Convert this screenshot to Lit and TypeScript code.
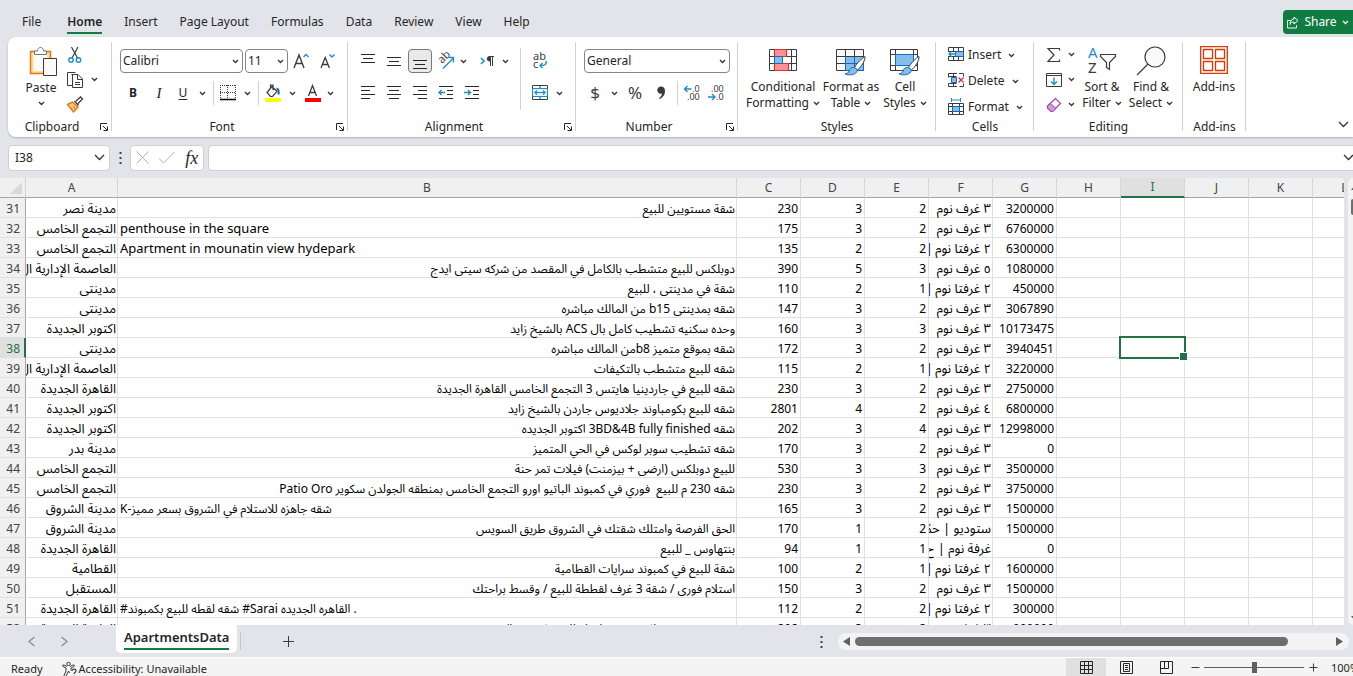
import { LitElement, html, css, svg, nothing } from "lit";
import { customElement, state } from "lit/decorators.js";
import { classMap } from "lit/directives/class-map.js";

type Row = [number, string, string, number, number, number, string, number];

const TWO = "٢ غرفتا نوم\u2009|";
const THREE = "٣ غرف نوم";

const ROWS: Row[] = [
  [31, "مدينة نصر", "شقة مستويين للبيع", 230, 3, 2, THREE, 3200000],
  [32, "التجمع الخامس", "penthouse in the square", 175, 3, 2, THREE, 6760000],
  [33, "التجمع الخامس", "Apartment in mounatin view hydepark", 135, 2, 2, TWO, 6300000],
  [34, "العاصمة الإدارية ال", "دوبلكس للبيع متشطب بالكامل في المقصد من شركه سيتى ايدج", 390, 5, 3, "٥ غرف نوم", 1080000],
  [35, "مدينتى", "شقة في مدينتى ، للبيع", 110, 2, 1, TWO, 450000],
  [36, "مدينتى", "شقه بمدينتى b15 من المالك مباشره", 147, 3, 2, THREE, 3067890],
  [37, "اكتوبر الجديدة", "وحده سكنيه تشطيب كامل بال ACS بالشيخ زايد", 160, 3, 3, THREE, 10173475],
  [38, "مدينتى", "شقه بموقع متميز b8من المالك مباشره", 172, 3, 2, THREE, 3940451],
  [39, "العاصمة الإدارية ال", "شقه للبيع متشطب بالتكيفات", 115, 2, 1, TWO, 3220000],
  [40, "القاهرة الجديدة", "شقه للبيع في جاردينيا هايتس 3 التجمع الخامس القاهرة الجديدة", 230, 3, 2, THREE, 2750000],
  [41, "اكتوبر الجديدة", "شقه للبيع بكومباوند جلاديوس جاردن بالشيخ زايد", 2801, 4, 2, "٤ غرف نوم", 6800000],
  [42, "اكتوبر الجديدة", "شقه 3BD&4B fully finished اكتوبر الجديده", 202, 3, 4, THREE, 12998000],
  [43, "مدينة بدر", "شقه تشطيب سوبر لوكس في الحي المتميز", 170, 3, 2, THREE, 0],
  [44, "التجمع الخامس", "للبيع دوبلكس (ارضى + بيزمنت) فيلات تمر حنة", 530, 3, 3, THREE, 3500000],
  [45, "التجمع الخامس", "شقه 230 م للبيع  فوري في كمبوند الباتيو اورو التجمع الخامس بمنطقه الجولدن سكوير Patio Oro", 230, 3, 2, THREE, 3750000],
  [46, "مدينة الشروق", "K-شقه جاهزه للاستلام في الشروق بسعر مميز", 165, 3, 2, THREE, 1500000],
  [47, "مدينة الشروق", "الحق الفرصة وامتلك شقتك في الشروق طريق السويس", 170, 1, 2, "ستوديو | حمّ", 1500000],
  [48, "القاهرة الجديدة", "بنتهاوس _ للبيع", 94, 1, 1, "غرفة نوم | ح", 0],
  [49, "القطامية", "شقة للبيع في كمبوند سرايات القطامية", 100, 2, 1, TWO, 1600000],
  [50, "المستقبل", "استلام فورى / شقة 3 غرف لقططة للبيع / وقسط براحتك", 150, 3, 2, THREE, 1500000],
  [51, "القاهرة الجديدة", "#شقه لقطه للبيع بكمبوند #Sarai القاهره الجديده .", 112, 2, 2, TWO, 300000],
  [52, "القاهرة الجديدة", "فرصه متميزه دوبلكس سوبر لقطه للبيع بكمبوند التجمع", 208, 3, 2, THREE, 900000],
];

const LETTERS = ["A", "B", "C", "D", "E", "F", "G", "H", "I", "J", "K", "L"];
const EMPTY = ["H", "I", "J", "K", "L"];
const TABS = ["File", "Home", "Insert", "Page Layout", "Formulas", "Data", "Review", "View", "Help"];

const INK = "#3b3b3b";
const BLUE = "#1e8bcd";

const icon = (w: number, h: number, body: unknown) =>
  html`<svg width=${w} height=${h} viewBox="0 0 ${w} ${h}" fill="none" stroke=${INK} aria-hidden="true">${body}</svg>`;

const chev = html`<svg class="chev" width="7" height="5" viewBox="0 0 7 5" fill="none" stroke="#333" stroke-width="1.3" aria-hidden="true"><path d="M1 1l2.5 2.5L6 1"/></svg>`;
const bigChev = html`<svg width="11" height="7" viewBox="0 0 11 7" fill="none" stroke="#333" stroke-width="1.3" aria-hidden="true"><path d="M1 1l4.5 4.5L10 1"/></svg>`;

const lines = (rows: [number, number, number][]) =>
  icon(16, 16, svg`<path stroke="#262626" d=${rows.map(([x, y, w]) => `M${x} ${y}.5h${w}`).join("")}/>`);

const brush = svg`<path d="M29 8.500c-3 1.500-8.500 7-10.500 11l3 2.500c3.500-3 8-9.500 7.500-13.500z" fill="#fff" stroke="#3b3b3b"/><path d="M18.500 19.500c-3-.5-5 1-5.500 3.500-.4 1.800-1.500 2.500-4 2.800 4 2 11.500 1.400 12.500-3.800z" fill="#84bcea" stroke="#1469b8"/>`;

const I = {
  paste: icon(32, 32, svg`<g transform="translate(4 0)"><path d="M1.500 5.500h20v22h-20z" fill="#fbdc9a" stroke="#e07a0c" stroke-width="1.500"/><path d="M4.500 8h14v17h-14z" fill="#fafafa" stroke="none"/><path d="M5.500 8.500v-3.500h3c0-4.700 6-4.700 6 0h3v3.500z" fill="#fff" stroke="#767676"/><path d="M14.500 12.500h13v17h-13z" fill="#fafafa"/></g>`),
  cut: icon(16, 18, svg`<path d="M4.500 1l6 11M11 1l-6 11" stroke-width="1.200"/><circle cx="4" cy="14" r="2.200" stroke="${BLUE}" stroke-width="1.400"/><circle cx="11.500" cy="14" r="2.200" stroke="${BLUE}" stroke-width="1.400"/>`),
  copy: icon(18, 18, svg`<path d="M6.500 14.500h-5v-13h8M5.500 3.500h6.500l4.500 4.500v8.500h-10v-13M11.500 4v4.500h5M9 11.500h5M9 13.500h5"/>`),
  painter: icon(18, 17, svg`<path d="M10 5l4.500-4 2 2-4.500 4.500M8.500 5l4 4.500" stroke-width="1.300"/><path d="M1.500 8.500l5-2.500 5.500 5-4.500 5z" fill="#f9c88b" stroke="#e07a0c" stroke-width="1.400"/><path d="M5 11.500l1.500 2M7.500 10l1.500 3" stroke="#e07a0c"/>`),
  grow: icon(18, 18, svg`<path d="M2 16l5-13 5 13M3.700 11.500h6.600" stroke-width="1.400"/><path d="M11.500 5l2.500-2.500 2.500 2.500" stroke="${BLUE}" stroke-width="1.300"/>`),
  shrink: icon(18, 18, svg`<path d="M3 16l4.200-10.500 4.200 10.500M4.500 12.500h5.400" stroke-width="1.300"/><path d="M11.500 2.500l2.500 2.500 2.500-2.500" stroke="${BLUE}" stroke-width="1.300"/>`),
  borders: icon(16, 16, svg`<path d="M0 .5h16M0 7.500h16M.5 0v14M7.500 0v14M15.500 0v14" stroke-dasharray="1 1"/><path d="M0 14.500h16" stroke="#000" stroke-width="1.500"/>`),
  fill: icon(18, 18, svg`<path d="M3 8.500l5-6 5 5-4.500 5h-2zM6.500 4.500v-3.500h2.500v5" stroke-width="1.200"/><path d="M12.500 4.500c2.500.5 2.500 3 2 6" stroke="#1469b8" stroke-width="2"/><path d="M1 14h16v4h-16z" fill="#ffff00" stroke="none"/>`),
  fontColor: icon(18, 18, svg`<path d="M4.500 12l4-10.500 4 10.500M6 8.500h5" stroke-width="1.300"/><path d="M1 14h16v4h-16z" fill="#f00" stroke="none"/>`),
  top: lines([[1, 1, 14], [3, 5, 10], [1, 9, 14]]),
  mid: lines([[1, 4, 14], [3, 8, 10], [1, 12, 14]]),
  bot: lines([[1, 7, 14], [3, 11, 10], [1, 15, 14]]),
  left: lines([[1, 1, 14], [1, 5, 9], [1, 9, 14], [1, 13, 9]]),
  center: lines([[1, 1, 14], [3, 5, 10], [1, 9, 14], [3, 13, 10]]),
  right: lines([[1, 1, 14], [6, 5, 9], [1, 9, 14], [6, 13, 9]]),
  outdent: icon(16, 16, svg`<path stroke="#262626" d="M1 1.500h14M9 5.500h6M9 9.500h6M1 13.500h14"/><path stroke="${BLUE}" stroke-width="1.400" d="M7 7.500h-6M3.500 5l-2.500 2.500 2.500 2.500"/>`),
  indent: icon(16, 16, svg`<path stroke="#262626" d="M1 1.500h14M9 5.500h6M9 9.500h6M1 13.500h14"/><path stroke="${BLUE}" stroke-width="1.400" d="M0 7.500h6.500M4 5l2.500 2.500-2.500 2.500"/>`),
  orient: icon(18, 18, svg`<text x="0" y="0" transform="translate(5 12) rotate(-45)" font-size="11" fill="#3b3b3b" stroke="none">ab</text><path d="M6 16.500l10-10M11.500 5.500h5v5" stroke="${BLUE}" stroke-width="1.300"/>`),
  ltr: icon(16, 14, svg`<path d="M1 4l3 3-3 3" stroke="${BLUE}" stroke-width="1.600"/><path d="M14 2.500h-4.500M10.500 2.500v9.500M12.500 2.500v9.500"/><path d="M10.500 2.500h-1a2.200 2.200 0 0 0 0 4.500h1z" fill="#3b3b3b"/>`),
  wrap: icon(18, 18, svg`<text x="2" y="8" font-size="11" fill="#3b3b3b" stroke="none">ab</text><text x="2" y="16" font-size="11" fill="#3b3b3b" stroke="none">c</text><path d="M15 9c1 4-2 4.500-6 4.500M11.500 11l-2.500 2.500 2.500 2.500" stroke="${BLUE}" stroke-width="1.400"/>`),
  merge: icon(16, 16, svg`<path d="M.5 .5h15v14h-15zM8 .5v3M8 11.500v3"/><path d="M.5 3.500h15v8h-15z" fill="#e5f2fc" stroke="${BLUE}"/><path d="M3 7.500h10M5 5.500l-2 2 2 2M11 5.500l2 2-2 2" stroke="${BLUE}" stroke-width="1.200"/>`),
  decUp: icon(18, 18, svg`<path d="M1.500 5h7M4.500 2l-3 3 3 3" stroke="${BLUE}" stroke-width="1.400"/><text x="9" y="8" font-size="9" fill="#3b3b3b" stroke="none">.0</text><text x="4" y="16" font-size="9" fill="#3b3b3b" stroke="none">.00</text>`),
  decDown: icon(18, 18, svg`<text x="4" y="8" font-size="9" fill="#3b3b3b" stroke="none">.00</text><path d="M1 13h7M5 10l3 3-3 3" stroke="${BLUE}" stroke-width="1.400"/><text x="9" y="16" font-size="9" fill="#3b3b3b" stroke="none">.0</text>`),
  cond: icon(28, 30, svg`<path d="M.5 3.500h27v21h-27zM.5 10.500h27M.5 17.500h27M5.500 3.500v21M14.500 3.500v21M22.500 3.500v21"/><path d="M5.500 3.500h12v7h-12zM5.500 17.500h14v7h-14z" fill="#ff9196" stroke="#d8322f" stroke-width="1.200"/><path d="M5.500 10.500h8v7h-8z" fill="#84bcea" stroke="#1469b8"/><path d="M14 11h8v6h-8z" fill="#fff" stroke="none"/>`),
  fmtTable: icon(30, 30, svg`<path d="M.5 3.500h27v21h-27z" fill="#fafafa"/><path d="M9.500 10.500h18v14h-18z" fill="#84bcea" stroke="#1469b8"/><path d="M.5 10.500h27M.5 17.500h27M9.500 3.500v21M18.500 3.500v21"/><path d="M9.500 17.500h18M18.500 10.500v14M9.500 10.500v14" stroke="#1469b8"/><g transform="translate(0 2)">${brush}</g>`),
  cellStyles: icon(30, 30, svg`<path d="M.5 3.500h27v21h-27zM5.500 3.500v21M.5 8.500h27M.5 19.500h27M23.500 3.500v5"/><path d="M5.500 8.500h18v11h-18z" fill="#84bcea" stroke="#1469b8"/><g transform="translate(0 2)">${brush}</g>`),
  insert: icon(16, 16, svg`<path d="M.5 .5h15v13h-15zM.5 4.500h15M.5 9.500h15M5.500 .5v13M10.500 .5v13"/><path d="M7.500 4.500h8v5h-8z" fill="#84bcea" stroke="#1469b8"/><path d="M0 5h7v4h-7z" fill="#fff" stroke="none"/><path d="M8 7h-7M4 4l-3 3 3 3" stroke="${BLUE}" stroke-width="1.300"/>`),
  remove: icon(16, 16, svg`<path d="M9 .5h-8.500v3h8M.5 3.500v1M9 13.500h-8.500v-3h8M5.500 .5v3M5.500 10.500v3M15.500 .5v3M15.500 10.500v3h-4M11 .5h4"/><path d="M3.500 4.500h5v5h-5z" fill="#84bcea" stroke="#1469b8"/><path d="M10.500 4.500l5 5M15.500 4.500l-5 5" stroke="#d8322f" stroke-width="1.300"/>`),
  format: icon(16, 18, svg`<path d="M3.500 0v4M12.500 0v4M3.500 2h9" stroke="${BLUE}"/><path d="M.5 5.500h15v11h-15zM.5 8.500h15M.5 13.500h15M4.500 5.500v11M11.500 5.500v11"/><path d="M4.500 8.500h7v5h-7z" fill="#84bcea" stroke="#1469b8"/>`),
  sum: icon(16, 16, svg`<path d="M13.500 3.500v-2h-11.500l6 6.500-6 6.500h11.500v-2" stroke-width="1.200"/>`),
  fillDown: icon(16, 16, svg`<path d="M.5 1.500h15v13h-15zM.5 3.500h15"/><path d="M8 5.500v7M5 9.500l3 3 3-3" stroke="${BLUE}" stroke-width="1.400"/>`),
  clear: icon(16, 16, svg`<path d="M1.500 9l8-7.500 5 5-8 8h-1.500l-3.500-3.500z" stroke="#a33fae" stroke-width="1.200" fill="#fff"/><path d="M1.500 9l3-2.500 5.500 5-3 3h-2l-3.500-3.500z" stroke="#a33fae" fill="#d29ad8"/>`),
  sort: icon(30, 30, svg`<text x="1" y="12" font-size="15" fill="${BLUE}" stroke="none">A</text><text x="1" y="27" font-size="15" fill="#3b3b3b" stroke="none">Z</text><path d="M13.500 8.500h15v2l-6 6v7l-3-2v-5l-6-6z" fill="#fafafa" stroke-width="1.200"/>`),
  find: icon(30, 30, svg`<circle cx="19" cy="11" r="10" fill="#fafafa" stroke-width="1.200"/><path d="M12 18l-11 11" stroke-width="1.300"/>`),
  addins: icon(28, 30, svg`<path d="M.7 .7h26.600v26.600h-26.600zM3.500 3.500h9v9h-9zM15.500 3.500h9v9h-9zM3.500 15.500h9v9h-9zM15.500 15.500h9v9h-9z" stroke="#d83b01" stroke-width="1.300"/>`),
  launcher: icon(8, 8, svg`<path d="M.5 7v-6.500h6.500M3 3l4 4M7.500 3.500v4h-4" stroke="#262626"/>`),
  share: icon(12, 13, svg`<path d="M3.500 4.500h-3v7.500h9v-3" stroke="#fff"/><path d="M7 1l4 3.500-4 3.500v-2c-2 0-3.500.5-4 2.500 0-3.500 1.500-5.500 4-5.500z" stroke="#fff"/>`),
  access: icon(15, 16, svg`<circle cx="6.500" cy="3" r="1.700"/><path d="M5 5.500l-3-1.500c-1.500-.5-2 1-1 1.500l3 1.500v3l-2 4.500c0 1 1.500 1.500 2 .5l2.500-5 1 2M8 5.500l3-1.500c1.500-.5 2 1 1 1.500l-3 1.500v2.500"/><path d="M10 10c0-2.500 4-2.500 4 0 0 1.500-2 1.500-2 3M12 14.500v1" stroke-width="1.200"/>`),
  normal: icon(13, 13, svg`<path d="M.5 .5h12v12h-12zM.5 4.500h12M.5 8.500h12M4.500 .5v12M8.500 .5v12" stroke="#262626"/>`),
  page: icon(13, 13, svg`<path d="M.5 .5h12v12h-12zM3.500 2.500h6v8h-6zM5 4.500h3M5 6.500h3M5 8.500h3" stroke="#262626"/>`),
  breaks: icon(13, 13, svg`<path d="M.5 .5h12v12h-12zM4.500 .5v7M8.500 .5v7M.5 7.500h8" stroke="#262626"/>`),
};

@customElement("app-root")
export class AppRoot extends LitElement {
  @state() private tab = "Home";

  static styles = css`
    :host {
      --ui: "Noto Sans", "Open Sans", sans-serif;
      --bar: #e2e4e9;
      --green: #107c41;
      display: flex;
      flex-direction: column;
      height: 100vh;
      overflow: hidden;
      background: var(--bar);
      color: #262626;
      font: 12px/16px var(--ui);
    }
    * { box-sizing: border-box; }
    button, input, select { font: inherit; color: inherit; margin: 0; padding: 0; border: 0; background: none; border-radius: 0; }
    button { display: flex; align-items: center; justify-content: center; flex: none; white-space: nowrap; }
    svg { display: block; flex: none; overflow: visible; }
    svg text { font-family: var(--ui); }

    .top { display: flex; align-items: center; justify-content: space-between; height: 37px; padding: 7px 0 0 22px; flex: none; }
    .tabs { display: flex; gap: 22px; }
    .tab { height: 24px; padding-top: 2px; border-bottom: 2px solid transparent; }
    .tab.on { font-weight: 600; border-color: var(--green); margin-left: 4px; }
    .share { height: 24px; width: 70px; background: var(--green); color: #fff; border-radius: 4px 0 0 4px; gap: 5px; }
    .share .chev { stroke: #fff; }

    .ribbon { display: flex; flex: none; height: 100px; margin-left: 8px; padding-top: 5px; background: #fff; border-radius: 8px 0 0 8px; box-shadow: 0 1px 2px #0000003a; }
    .group { display: flex; flex-direction: column; flex: none; background: linear-gradient(#d1d1d1, #d1d1d1) right top / 1px 89px no-repeat; }
    .body { display: flex; height: 76px; }
    .foot { display: flex; align-items: center; height: 18px; }
    .foot span { flex: 1; text-align: center; }
    .foot button { width: 16px; height: 14px; }
    .rows { display: flex; flex-direction: column; gap: 8px; padding: 7px 0 0 8px; }
    .row { display: flex; align-items: center; height: 24px; }
    .row button, .stack button { height: 24px; }
    .b26 { width: 26px; }
    .b22 { width: 22px; }
    .drop { width: 16px; }
    .drop.thin { width: 8px; }
    .rule { width: 1px; height: 24px; background: #d1d1d1; margin: 0 3px; flex: none; }
    .pressed { width: 24px; margin: 0 1px; background: #e9e9e9; border: 1px solid #7a7a7a; border-radius: 4px; }
    .dir { margin-left: 8px; }
    .big { flex-direction: column; justify-content: flex-start; }
    .glyph { font-size: 12px; }
    .bold { font-weight: 700; }
    .it { font-style: italic; font-family: "Liberation Serif", serif; font-size: 15px; }
    .un { text-decoration: underline; text-underline-offset: 2px; }
    .sym { font-size: 17px; color: #3b3b3b; }

    .pick { position: relative; display: flex; align-items: center; height: 24px; border: 1px solid #858585; border-radius: 4px; background: #fff; }
    .pick select { appearance: none; width: 100%; height: 22px; padding: 0 2px; outline: none; }
    .pick .chev { position: absolute; right: 3px; pointer-events: none; }
    .w-font { width: 123px; margin-right: 2px; }
    .w-size { width: 43px; }
    .w-num { width: 146px; }

    .g-clip { width: 104px; }
    .g-font { width: 236px; }
    .g-align { width: 228px; }
    .g-num { width: 162px; }
    .g-styles { width: 198px; }
    .g-cells { width: 98px; }
    .g-edit { width: 149px; }
    .g-add { width: 63px; }

    .stack { display: flex; flex-direction: column; }
    .stack > div { display: flex; align-items: center; height: 25px; }
    .clip { padding-left: 10px; }
    .clip .big { width: 46px; padding-top: 4px; }
    .clip .big .chev { margin-top: 5px; }
    .lab { margin-top: 2px; }
    .lab-1 { margin-top: 3px; }
    .align-left { width: 166px; gap: 8px; height: 62px; margin-top: 6px; padding-top: 1px; display: flex; flex-direction: column; border-right: 1px solid #d1d1d1; }
    .align { padding-left: 7px; }
    .styles { padding: 4px 0 0 6px; }
    .two { display: flex; align-items: center; gap: 4px; }
    .w-cond { width: 78px; }
    .w-tab { width: 58px; }
    .w-cell { width: 50px; }
    .cells { padding-left: 12px; }
    .cells button { height: 26px; gap: 4px; justify-content: flex-start; }
    .cells .chev { margin-left: 3px; }
    .edit { padding-left: 7px; gap: 5px; }
    .w-sort { width: 44px; padding-top: 4px; }
    .w-find { width: 44px; padding-top: 4px; }
    .w-add { width: 62px; padding-top: 4px; }
    .collapse { margin: 76px 4px 0 auto; width: 12px; height: 12px; }

    .formula { display: flex; align-items: center; height: 41px; padding-left: 8px; flex: none; }
    .box { display: flex; align-items: center; height: 26px; background: #fff; border: 1px solid #cfcfcf; border-radius: 4px; }
    .name { width: 102px; padding: 0 4px 0 6px; justify-content: space-between; }
    .name input { width: 70px; outline: none; }
    .dots { width: 20px; justify-content: center; display: flex; }
    .fx { width: 74px; justify-content: space-around; margin-right: 4px; }
    .fx i { font: italic 18px/20px "Liberation Serif", serif; }
    .long { flex: 1; border-right: 0; border-radius: 4px 0 0 4px; }
    .long input { flex: 1; outline: none; padding: 0 6px; min-width: 0; }
    .long button { width: 10px; }

    .main { display: flex; flex: 1; min-height: 0; }
    .grid { flex: 1; min-width: 0; overflow: hidden; background: #fff; }
    table { table-layout: fixed; width: 1377px; border-spacing: 0; }
    .c0 { width: 26px; }
    .cA { width: 92px; }
    .cB { width: 619px; }
    th { font-weight: 400; color: #444; background: #f0f0f0; padding: 0; }
    thead th { height: 20px; border-right: 1px solid #d6d6d6; border-bottom: 1px solid #a6a6a6; }
    thead .sel { background: #e0e0e0; color: #217346; border-bottom: 2px solid #217346; }
    .corner { vertical-align: bottom; }
    .corner svg { margin-left: auto; margin-right: 3px; margin-bottom: 3px; }
    tbody th { height: 20px; line-height: 17px; text-align: right; padding: 2px 5px 0 0; border-right: 1px solid #a6a6a6; border-bottom: 1px solid #e0e0e0; }
    tbody th.sel { background: #e0e0e0; color: #217346; border-right: 2px solid #217346; padding-right: 4px; }
    td { height: 20px; padding: 2px 2px 0; line-height: 17px; color: #000; border-right: 1px solid #e0e0e0; border-bottom: 1px solid #e0e0e0; white-space: pre; text-align: right; }
    td.latin { text-align: left; font-size: 13px; }
    td.ltr { text-align: left; }
    td.ar { font-family: "Noto Sans", "Noto Sans Arabic", "DejaVu Sans", sans-serif; }
    td.short { font-size: 13px; overflow-x: clip; overflow-y: visible; }
    td.active { position: relative; }
    td.active::before { content: ""; position: absolute; inset: -2px; border: 2px solid #217346; }
    td.active::after { content: ""; position: absolute; right: -4px; bottom: -4px; width: 7px; height: 7px; background: #217346; border: 1px solid #fff; }
    .vscroll { width: 9px; padding-left: 4px; flex: none; overflow: hidden; }
    .vtrack { display: flex; flex-direction: column; height: 100%; background: #f3f3f3; border-radius: 6px 0 0 6px; padding: 7px 0 4px 3px; }
    .vthumb { height: 16px; background: #6e6e6e; border-radius: 3px 0 0 3px; margin: 9px 0 auto; }

    .sheets { display: flex; align-items: center; height: 32px; flex: none; padding-right: 4px; }
    .nav { width: 33px; height: 30px; color: #8a8a8a; }
    .navs { display: flex; padding-left: 15px; width: 116px; }
    .sheet { align-self: flex-start; height: 28px; padding: 1px 8px 3px; background: #fff; border-radius: 0 0 5px 5px; font-weight: 600; font-size: 13px; }
    .sheet span { border-bottom: 2px solid var(--green); line-height: 22px; height: 24px; }
    .vr { width: 1px; height: 18px; background: #c8c8c8; margin-left: 3px; }
    .plus { width: 94px; height: 30px; }
    .hwrap { display: flex; align-items: center; margin-left: auto; gap: 15px; }
    .hscroll { display: flex; align-items: center; width: 511px; height: 17px; padding: 0 6px 0 5px; background: #f3f3f3; border-radius: 8px; gap: 5px; }
    .htrack { flex: 1; }
    .hthumb { width: 91%; height: 9px; background: #6e6e6e; border-radius: 5px; }

    .status { display: flex; height: 19px; flex: none; align-items: flex-start; padding-left: 11px; background: #f4f4f4; border-top: 1px solid #fff; font-size: 11px; white-space: nowrap; }
    .status > span, .acc { padding-top: 3px; }
    .acc { display: flex; gap: 2px; margin-left: 19px; }
    .views { display: flex; margin-left: auto; }
    .views button { width: 40px; height: 19px; }
    .views .on { background: #e0e0e0; }
    .zoom { display: flex; align-items: center; height: 19px; }
    .zoom button { width: 18px; height: 19px; }
    .zoom input { appearance: none; width: 100px; height: 19px; background: linear-gradient(#5f5f5f, #5f5f5f) center / 100% 1px no-repeat; }
    .zoom input::-webkit-slider-thumb { appearance: none; width: 5px; height: 11px; background: #5f5f5f; }
    .pct { width: 31px; padding-left: 9px; overflow: hidden; }
  `;

  private btn(label: string, cls: string, body: unknown) {
    return html`<button class=${cls} aria-label=${label}>${body}</button>`;
  }

  private drop(label: string, thin = false) {
    return this.btn(label + " options", thin ? "drop thin" : "drop", chev);
  }

  private pick(label: string, cls: string, value: string) {
    return html`<div class="pick ${cls}"><select aria-label=${label}><option>${value}</option></select>${chev}</div>`;
  }

  private group(cls: string, title: string, body: unknown, launcher = false) {
    return html`<section class="group ${cls}" aria-label=${title}>
      ${body}
      <div class="foot"><span>${title}</span>${launcher ? this.btn(title + " settings", "", I.launcher) : nothing}</div>
    </section>`;
  }

  private big(cls: string, pic: unknown, one: string, two?: string) {
    return html`<button class="big ${cls}">${pic}<span class="lab-1">${one}</span>${two ? html`<span class="two">${two}${chev}</span>` : nothing}</button>`;
  }

  private ribbon() {
    const b = (l: string, body: unknown, c = "b26") => this.btn(l, c, body);
    return html`<div class="ribbon">
      ${this.group("g-clip", "Clipboard", html`<div class="body clip">
        <button class="big">${I.paste}<span class="lab">Paste</span>${chev}</button>
        <div class="stack">
          <div>${b("Cut", I.cut, "b22")}</div>
          <div>${b("Copy", I.copy, "b22")}${this.drop("Copy")}</div>
          <div>${b("Format Painter", I.painter, "b22")}</div>
        </div></div>`, true)}
      ${this.group("g-font", "Font", html`<div class="body"><div class="rows">
        <div class="row">${this.pick("Font", "w-font", "Calibri")}${this.pick("Font size", "w-size", "11")}${b("Increase font size", I.grow)}${b("Decrease font size", I.shrink)}</div>
        <div class="row">${b("Bold", html`<span class="glyph bold">B</span>`)}${b("Italic", html`<span class="it">I</span>`)}${b("Underline", html`<span class="glyph un">U</span>`, "b22")}${this.drop("Underline")}<i class="rule"></i>${b("Borders", I.borders, "b22")}${this.drop("Borders")}<i class="rule"></i>${b("Fill colour", I.fill, "b22")}${this.drop("Fill colour")}${b("Font colour", I.fontColor)}${this.drop("Font colour", true)}</div>
      </div></div>`, true)}
      ${this.group("g-align", "Alignment", html`<div class="body align">
        <div class="align-left">
          <div class="row">${b("Top align", I.top)}${b("Middle align", I.mid)}${b("Bottom align", I.bot, "pressed")}${b("Orientation", I.orient)}${this.drop("Orientation", true)}${b("Text direction", I.ltr, "b26 dir")}${this.drop("Text direction", true)}</div>
          <div class="row">${b("Align left", I.left)}${b("Center", I.center)}${b("Align right", I.right)}${b("Decrease indent", I.outdent)}${b("Increase indent", I.indent)}</div>
        </div>
        <div class="rows"><div class="row">${b("Wrap text", I.wrap, "b22")}</div><div class="row">${b("Merge and center", I.merge, "b22")}${this.drop("Merge")}</div></div>
      </div>`, true)}
      ${this.group("g-num", "Number", html`<div class="body"><div class="rows">
        <div class="row">${this.pick("Number format", "w-num", "General")}</div>
        <div class="row">${b("Currency", html`<span class="sym">$</span>`, "b22")}${this.drop("Currency")}${b("Percent", html`<span class="sym">%</span>`)}${b("Comma", icon(10, 14, svg`<path d="M5 .5a3.600 3.600 0 1 0 1 7c-.3 2-1.300 3.500-3 4.500l.7 1c3-1.500 5.300-4 5.300-8 0-2.800-1.500-4.500-4-4.500z" fill="#3b3b3b" stroke="none"/>`))}<i class="rule"></i>${b("Increase decimal", I.decUp, "b22")}${b("Decrease decimal", I.decDown)}</div>
      </div></div>`, true)}
      ${this.group("g-styles", "Styles", html`<div class="body styles">
        ${this.big("w-cond", I.cond, "Conditional", "Formatting")}${this.big("w-tab", I.fmtTable, "Format as", "Table")}${this.big("w-cell", I.cellStyles, "Cell", "Styles")}
      </div>`)}
      ${this.group("g-cells", "Cells", html`<div class="body cells"><div>
        <button>${I.insert}Insert${chev}</button><button>${I.remove}Delete${chev}</button><button>${I.format}Format${chev}</button>
      </div></div>`)}
      ${this.group("g-edit", "Editing", html`<div class="body edit">
        <div class="stack">
          <div>${b("AutoSum", I.sum)}${this.drop("AutoSum", true)}</div>
          <div>${b("Fill", I.fillDown)}${this.drop("Fill", true)}</div>
          <div>${b("Clear", I.clear)}${this.drop("Clear", true)}</div>
        </div>
        ${this.big("w-sort", I.sort, "Sort &", "Filter")}${this.big("w-find", I.find, "Find &", "Select")}
      </div>`)}
      ${this.group("g-add", "Add-ins", html`<div class="body">${this.big("w-add", I.addins, "Add-ins")}</div>`)}
      <button class="collapse" aria-label="Collapse ribbon">${bigChev}</button>
    </div>`;
  }

  private textCell(t: string) {
    const first = t[0];
    const latin = !/[\u0600-\u06ff]/.test(t);
    const ltr = latin || first === "K" || first === "#";
    return html`<td class=${classMap({ latin, ltr, ar: !latin })} dir=${ltr ? "ltr" : "rtl"}>${t}</td>`;
  }

  private grid() {
    return html`<div class="grid"><table>
      <colgroup><col class="c0"><col class="cA"><col class="cB">${LETTERS.slice(2).map(() => html`<col>`)}</colgroup>
      <thead><tr>
        <th class="corner"><svg width="12" height="12" viewBox="0 0 12 12" aria-hidden="true"><path d="M12 0v12H0z" fill="#d9d9d9"/></svg></th>
        ${LETTERS.map((l) => html`<th scope="col" class=${l === "I" ? "sel" : ""}>${l}</th>`)}
      </tr></thead>
      <tbody>${ROWS.map(([n, a, b, c, d, e, f, g]) => html`<tr>
        <th scope="row" class=${n === 38 ? "sel" : ""}>${n}</th>
        <td class="ar short" dir="rtl">${a}</td>${this.textCell(b)}
        <td>${c}</td><td>${d}</td><td>${e}</td><td class="ar short" dir="rtl">${f}</td><td>${g}</td>
        ${EMPTY.map((l) => html`<td class=${n === 38 && l === "I" ? "active" : ""}></td>`)}
      </tr>`)}</tbody>
    </table></div>`;
  }

  render() {
    const dots = html`<svg width="3" height="13" viewBox="0 0 3 13" fill="#444" aria-hidden="true"><path d="M.5 1h2v2h-2zM.5 6h2v2h-2zM.5 11h2v2h-2z"/></svg>`;
    return html`
      <div class="top">
        <nav class="tabs">${TABS.map((t) => html`<button class=${classMap({ tab: true, on: t === this.tab })} @click=${() => (this.tab = t)}>${t}</button>`)}</nav>
        <button class="share">${I.share}<span>Share</span>${chev}</button>
      </div>
      ${this.ribbon()}
      <div class="formula">
        <div class="box name"><input aria-label="Name box" value="I38">${bigChev}</div>
        <span class="dots">${dots}</span>
        <div class="box fx">
          <button aria-label="Cancel">${icon(13, 13, svg`<path d="M.5 .5l12 12M12.500 .5l-12 12" stroke="#b0b0b0"/>`)}</button>
          <button aria-label="Enter">${icon(17, 13, svg`<path d="M1 7.500l4.500 4.500l11-11" stroke="#b0b0b0"/>`)}</button>
          <button aria-label="Insert function"><i>fx</i></button>
        </div>
        <div class="box long"><input aria-label="Formula bar"><button aria-label="Expand formula bar">${bigChev}</button></div>
      </div>
      <div class="main">${this.grid()}<div class="vscroll"><div class="vtrack">
        ${icon(8, 5, svg`<path d="M0 5l4-5 4 5z" fill="#5f5f5f" stroke="none"/>`)}
        <div class="vthumb"></div>
        ${icon(8, 5, svg`<path d="M0 0l4 5 4-5z" fill="#5f5f5f" stroke="none"/>`)}
      </div></div></div>
      <div class="sheets">
        <div class="navs">
          <button class="nav" aria-label="Previous sheet">${icon(7, 11, svg`<path d="M6.500 1l-5.500 4.500 5.500 4.500" stroke="#8a8a8a" stroke-width="1.200"/>`)}</button>
          <button class="nav" aria-label="Next sheet">${icon(7, 11, svg`<path d="M.5 1l5.500 4.500-5.500 4.500" stroke="#8a8a8a" stroke-width="1.200"/>`)}</button>
        </div>
        <button class="sheet"><span>ApartmentsData</span></button><i class="vr"></i>
        <button class="plus" aria-label="New sheet">${icon(11, 11, svg`<path d="M5.500 0v11M0 5.500h11"/>`)}</button>
        <div class="hwrap">${dots}<div class="hscroll">
          ${icon(7, 9, svg`<path d="M7 0v9l-7-4.500z" fill="#5f5f5f" stroke="none"/>`)}
          <div class="htrack"><div class="hthumb"></div></div>
          ${icon(7, 9, svg`<path d="M0 0v9l7-4.500z" fill="#5f5f5f" stroke="none"/>`)}
        </div></div>
      </div>
      <div class="status">
        <span>Ready</span><div class="acc">${I.access}<span>Accessibility: Unavailable</span></div>
        <div class="views">${this.btn("Normal view", "on", I.normal)}${this.btn("Page layout view", "", I.page)}${this.btn("Page break view", "", I.breaks)}</div>
        <div class="zoom">
          <button aria-label="Zoom out">${icon(9, 9, svg`<path d="M.5 4.500h8"/>`)}</button>
          <input type="range" aria-label="Zoom" min="0" max="100" value="50">
          <button aria-label="Zoom in">${icon(9, 9, svg`<path d="M.5 4.500h8M4.500 .5v8"/>`)}</button>
          <span class="pct">100%</span>
        </div>
      </div>`;
  }
}
